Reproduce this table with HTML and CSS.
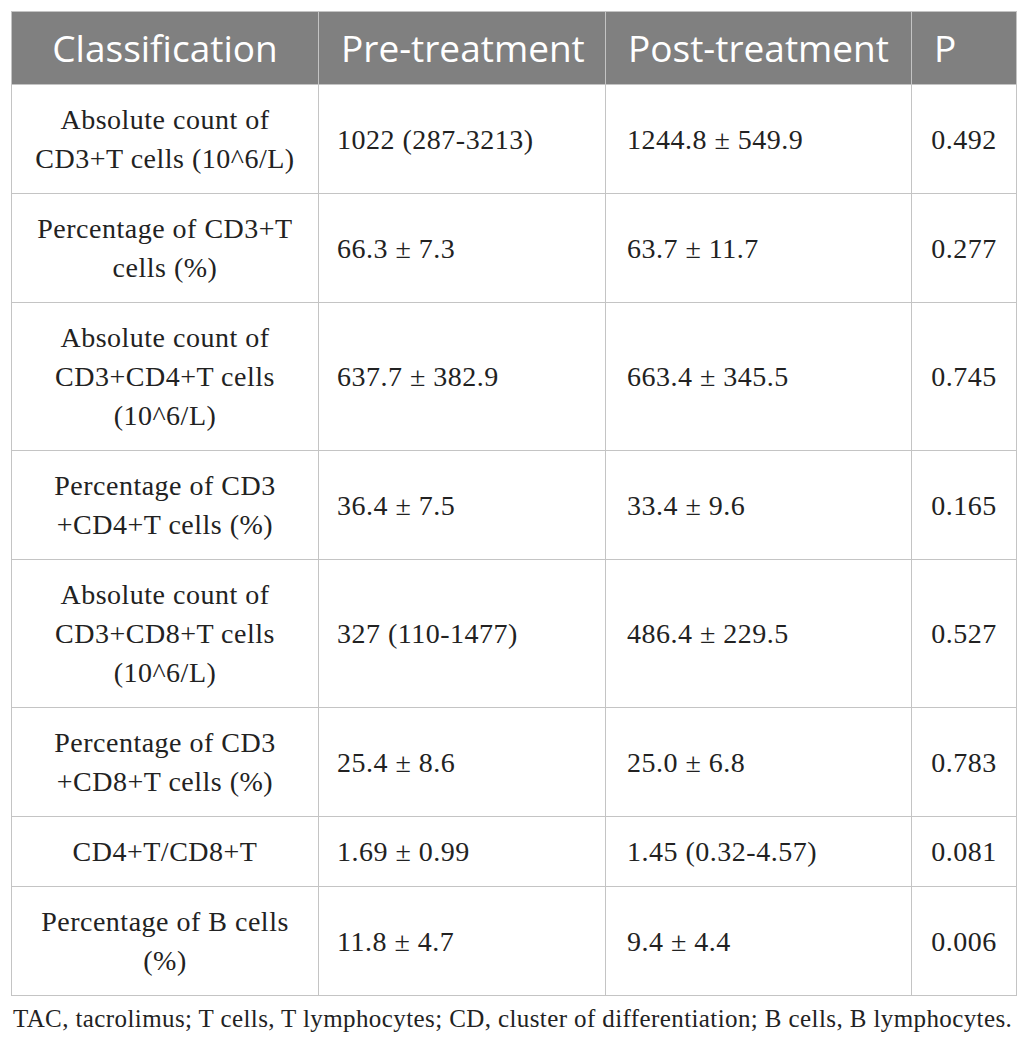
FILE: index.html
```html
<!DOCTYPE html>
<html lang="en">
<head>
<meta charset="utf-8">
<title>Table</title>
<link rel="stylesheet" href="styles.css">
</head>
<body>
<div class="page">
<table class="data">
<colgroup>
<col class="c1"><col class="c2"><col class="c3"><col class="c4">
</colgroup>
<thead>
<tr><th class="first">Classification</th><th>Pre-treatment</th><th>Post-treatment</th><th>P</th></tr>
</thead>
<tbody>
<tr><td class="first">Absolute count of<br>CD3+T cells (10^6/L)</td><td class="pre">1022 (287-3213)</td><td>1244.8 ± 549.9</td><td class="p">0.492</td></tr>
<tr><td class="first">Percentage of CD3+T<br>cells (%)</td><td class="pre">66.3 ± 7.3</td><td>63.7 ± 11.7</td><td class="p">0.277</td></tr>
<tr><td class="first">Absolute count of<br>CD3+CD4+T cells<br>(10^6/L)</td><td class="pre">637.7 ± 382.9</td><td>663.4 ± 345.5</td><td class="p">0.745</td></tr>
<tr><td class="first">Percentage of CD3<br>+CD4+T cells (%)</td><td class="pre">36.4 ± 7.5</td><td>33.4 ± 9.6</td><td class="p">0.165</td></tr>
<tr><td class="first">Absolute count of<br>CD3+CD8+T cells<br>(10^6/L)</td><td class="pre">327 (110-1477)</td><td>486.4 ± 229.5</td><td class="p">0.527</td></tr>
<tr><td class="first">Percentage of CD3<br>+CD8+T cells (%)</td><td class="pre">25.4 ± 8.6</td><td>25.0 ± 6.8</td><td class="p">0.783</td></tr>
<tr><td class="first">CD4+T/CD8+T</td><td class="pre">1.69 ± 0.99</td><td>1.45 (0.32-4.57)</td><td class="p">0.081</td></tr>
<tr><td class="first">Percentage of B cells<br>(%)</td><td class="pre">11.8 ± 4.7</td><td>9.4 ± 4.4</td><td class="p">0.006</td></tr>
</tbody>
</table>
<p class="note">TAC, tacrolimus; T cells, T lymphocytes; CD, cluster of differentiation; B cells, B lymphocytes.</p>
</div>
</body>
</html>
```

FILE: styles.css
```css
html, body {
  margin: 0;
  padding: 0;
  background: #ffffff;
}
.page {
  padding: 11px 11px 0 11px;
}
.data {
  border-collapse: collapse;
  width: 1005px;
  table-layout: fixed;
}
.c1 { width: 307px; }
.c2 { width: 287px; }
.c3 { width: 306px; }
.c4 { width: 105px; }
.data th {
  background: #808080;
  color: #ffffff;
  font-family: "Open Sans", "Noto Sans", sans-serif;
  font-weight: 400;
  font-size: 37px;
  line-height: 46px;
  height: 73px;
  padding: 0 8px 0 22px;
  text-align: left;
  border: 1px solid #c4c4c4;
  box-sizing: border-box;
}
.data th.first { text-align: center; padding: 0 4px; }
.data td {
  font-family: "Liberation Serif", "Times New Roman", serif;
  font-size: 28px;
  letter-spacing: 0.5px;
  line-height: 39px;
  color: #222222;
  padding: 15px 8px 15px 21px;
  border: 1px solid #c4c4c4;
  text-align: left;
  vertical-align: middle;
}
.data td.pre { padding-left: 18px; }
.data td.first { text-align: center; padding: 15px 4px; }
.data td.p { text-align: center; padding: 15px 2px; }
.note {
  margin: 9px 0 0 2px;
  font-family: "Liberation Serif", "Times New Roman", serif;
  font-size: 25px;
  letter-spacing: 0.4px;
  line-height: 28px;
  color: #222222;
  white-space: nowrap;
}
```
